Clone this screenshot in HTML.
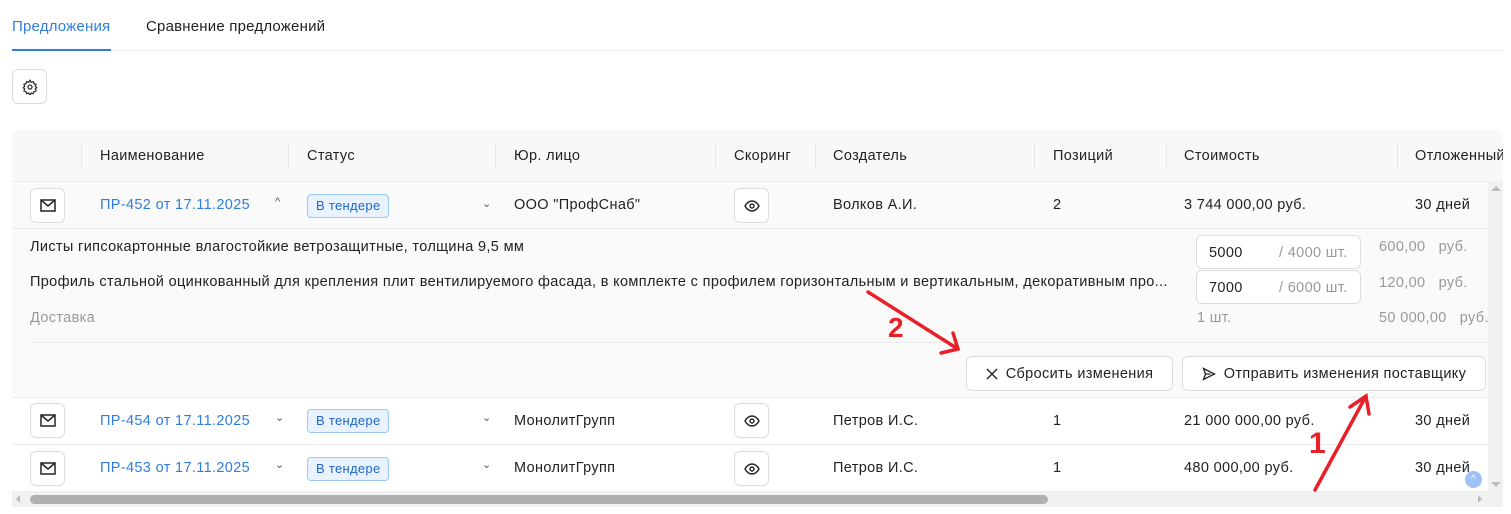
<!DOCTYPE html>
<html><head><meta charset="utf-8"><style>
*{box-sizing:border-box;margin:0;padding:0}
body{width:1511px;height:514px;overflow:hidden;background:#fff;font-family:"Liberation Sans","DejaVu Sans",sans-serif;font-size:14.5px;letter-spacing:0.35px;color:#222;position:relative}
.a{position:absolute;white-space:nowrap}
.btn{position:absolute;border:1px solid #ddd;border-radius:6px;background:#fff;display:flex;align-items:center;justify-content:center}
.lnk{color:#2f7de1}
.tag{position:absolute;height:24px;padding:0 8px;border:1px solid #9cc8f5;background:#e8f3ff;color:#1f66c7;border-radius:4px;font-size:13px;line-height:22px;letter-spacing:0.3px}
.hl{position:absolute;height:1px;background:#ececec}
.vs{position:absolute;width:1px;height:26px;top:143px;background:#e6e6e6}
.g{color:#999}
.inp{position:absolute;width:165px;height:34px;border:1px solid #ddd;border-radius:6px;background:#fff}
</style></head><body>
<div class="a lnk" style="left:12px;top:18px;font-size:15px;letter-spacing:0.2px">Предложения</div>
<div class="a" style="left:146px;top:18px;font-size:15px;letter-spacing:0.2px">Сравнение предложений</div>
<div class="a" style="left:12px;top:49px;width:99px;height:2px;background:#2f7de1"></div>
<div class="hl" style="left:111px;top:50px;width:1392px"></div>
<div class="btn" style="left:12px;top:69px;width:35px;height:35px"><svg width="16" height="16" viewBox="0 0 24 24" fill="none" stroke="#333" stroke-width="2"><circle cx="12" cy="12" r="3"/><path d="M12 2l2 3 3-1 1 3 3 1-1 3 2 2-2 2 1 3-3 1-1 3-3-1-2 3-2-3-3 1-1-3-3-1 1-3-2-2 2-2-1-3 3-1 1-3 3 1z"/></svg></div>

<div class="a" style="left:12px;top:130px;width:1491px;height:51px;background:#f8f8f8;border-radius:8px 8px 0 0"></div>
<div class="vs" style="left:81px"></div><div class="vs" style="left:288px"></div><div class="vs" style="left:495px"></div><div class="vs" style="left:715px"></div><div class="vs" style="left:815px"></div><div class="vs" style="left:1034px"></div><div class="vs" style="left:1166px"></div><div class="vs" style="left:1397px"></div>
<div class="a" style="left:100px;top:148px">Наименование</div>
<div class="a" style="left:307px;top:148px">Статус</div>
<div class="a" style="left:514px;top:148px">Юр. лицо</div>
<div class="a" style="left:734px;top:148px">Скоринг</div>
<div class="a" style="left:833px;top:148px">Создатель</div>
<div class="a" style="left:1053px;top:148px">Позиций</div>
<div class="a" style="left:1184px;top:148px">Стоимость</div>
<div class="a" style="left:1415px;top:148px;width:88px;overflow:hidden">Отложенный</div>
<div class="hl" style="left:12px;top:181px;width:1476px"></div>

<div class="a" style="left:12px;top:182px;width:1476px;height:215px;background:#fafafa"></div>
<div class="hl" style="left:12px;top:228px;width:1476px"></div>
<div class="hl" style="left:30px;top:342px;width:1458px"></div>
<div class="hl" style="left:12px;top:397px;width:1476px"></div>
<div class="hl" style="left:12px;top:444px;width:1476px"></div>

<!-- row 1 -->
<div class="btn" style="left:30px;top:188px;width:35px;height:35px"><svg width="16" height="13" viewBox="0 0 16 13" fill="none" stroke="#222" stroke-width="1.5"><rect x="1" y="1" width="14" height="11"/><path d="M1 1l7 6 7-6"/></svg></div>
<div class="a lnk" style="left:100px;top:197px">ПР-452 от 17.11.2025</div>
<div class="a" style="left:275px;top:196px;font-size:11px;color:#555">^</div>
<div class="tag" style="left:307px;top:194px">В тендере</div>
<div class="a" style="left:482px;top:197px;font-size:11px;color:#555">⌄</div>
<div class="a" style="left:514px;top:197px">ООО "ПрофСнаб"</div>
<div class="btn" style="left:734px;top:188px;width:35px;height:35px"><svg width="16" height="12" viewBox="0 0 16 12" fill="none" stroke="#222" stroke-width="1.4"><path d="M1 6C3 2.5 5.5 1 8 1s5 1.5 7 5c-2 3.5-4.5 5-7 5S3 9.5 1 6z"/><circle cx="8" cy="6" r="2"/></svg></div>
<div class="a" style="left:833px;top:197px">Волков А.И.</div>
<div class="a" style="left:1053px;top:197px">2</div>
<div class="a" style="left:1184px;top:197px">3 744 000,00 руб.</div>
<div class="a" style="left:1415px;top:197px">30 дней</div>

<!-- expansion -->
<div class="a" style="left:30px;top:239px">Листы гипсокартонные влагостойкие ветрозащитные, толщина 9,5 мм</div>
<div class="a" style="left:30px;top:274px">Профиль стальной оцинкованный для крепления плит вентилируемого фасада, в комплекте с профилем горизонтальным и вертикальным, декоративным про...</div>
<div class="a g" style="left:30px;top:310px">Доставка</div>
<div class="inp" style="left:1196px;top:235px"></div>
<div class="a" style="left:1209px;top:245px">5000</div><div class="a g" style="left:1279px;top:245px">/ 4000 шт.</div>
<div class="inp" style="left:1196px;top:270px"></div>
<div class="a" style="left:1209px;top:280px">7000</div><div class="a g" style="left:1279px;top:280px">/ 6000 шт.</div>
<div class="a g" style="left:1197px;top:310px">1 шт.</div>
<div class="a g" style="left:1379px;top:239px">600,00 &nbsp; руб.</div>
<div class="a g" style="left:1379px;top:275px">120,00 &nbsp; руб.</div>
<div class="a g" style="left:1379px;top:310px">50 000,00 &nbsp; руб.</div>
<div class="btn" style="left:966px;top:356px;width:207px;height:35px;gap:8px"><svg width="12" height="12" viewBox="0 0 12 12" stroke="#222" stroke-width="1.4"><path d="M1 1l10 10M11 1L1 11"/></svg><span>Сбросить изменения</span></div>
<div class="btn" style="left:1182px;top:356px;width:304px;height:35px;gap:8px"><svg width="14" height="14" viewBox="0 0 14 14" fill="none" stroke="#222" stroke-width="1.3"><path d="M1.5 1.5l11 5.5-11 5.5 2-5.5z M3.5 7h5"/></svg><span>Отправить изменения поставщику</span></div>

<!-- row 2 -->
<div class="btn" style="left:30px;top:403px;width:35px;height:35px"><svg width="16" height="13" viewBox="0 0 16 13" fill="none" stroke="#222" stroke-width="1.5"><rect x="1" y="1" width="14" height="11"/><path d="M1 1l7 6 7-6"/></svg></div>
<div class="a lnk" style="left:100px;top:413px">ПР-454 от 17.11.2025</div>
<div class="a" style="left:275px;top:411px;font-size:11px;color:#555">⌄</div>
<div class="tag" style="left:307px;top:409px">В тендере</div>
<div class="a" style="left:482px;top:411px;font-size:11px;color:#555">⌄</div>
<div class="a" style="left:514px;top:413px">МонолитГрупп</div>
<div class="btn" style="left:734px;top:403px;width:35px;height:35px"><svg width="16" height="12" viewBox="0 0 16 12" fill="none" stroke="#222" stroke-width="1.4"><path d="M1 6C3 2.5 5.5 1 8 1s5 1.5 7 5c-2 3.5-4.5 5-7 5S3 9.5 1 6z"/><circle cx="8" cy="6" r="2"/></svg></div>
<div class="a" style="left:833px;top:413px">Петров И.С.</div>
<div class="a" style="left:1053px;top:413px">1</div>
<div class="a" style="left:1184px;top:413px">21 000 000,00 руб.</div>
<div class="a" style="left:1415px;top:413px">30 дней</div>

<!-- row 3 -->
<div class="btn" style="left:30px;top:451px;width:35px;height:35px"><svg width="16" height="13" viewBox="0 0 16 13" fill="none" stroke="#222" stroke-width="1.5"><rect x="1" y="1" width="14" height="11"/><path d="M1 1l7 6 7-6"/></svg></div>
<div class="a lnk" style="left:100px;top:460px">ПР-453 от 17.11.2025</div>
<div class="a" style="left:275px;top:458px;font-size:11px;color:#555">⌄</div>
<div class="tag" style="left:307px;top:457px">В тендере</div>
<div class="a" style="left:482px;top:458px;font-size:11px;color:#555">⌄</div>
<div class="a" style="left:514px;top:460px">МонолитГрупп</div>
<div class="btn" style="left:734px;top:451px;width:35px;height:35px"><svg width="16" height="12" viewBox="0 0 16 12" fill="none" stroke="#222" stroke-width="1.4"><path d="M1 6C3 2.5 5.5 1 8 1s5 1.5 7 5c-2 3.5-4.5 5-7 5S3 9.5 1 6z"/><circle cx="8" cy="6" r="2"/></svg></div>
<div class="a" style="left:833px;top:460px">Петров И.С.</div>
<div class="a" style="left:1053px;top:460px">1</div>
<div class="a" style="left:1184px;top:460px">480 000,00 руб.</div>
<div class="a" style="left:1415px;top:460px">30 дней</div>

<!-- scrollbars -->
<div class="a" style="left:1488px;top:181px;width:15px;height:310px;background:#f1f1f1"></div>
<div class="a" style="left:1491px;top:186px;width:0;height:0;border:5px solid transparent;border-bottom-color:#bbb;border-top:0"></div>
<div class="a" style="left:1491px;top:482px;width:0;height:0;border:5px solid transparent;border-top-color:#bbb;border-bottom:0"></div>
<div class="a" style="left:12px;top:491px;width:1491px;height:16px;background:#f1f1f1"></div>
<div class="a" style="left:30px;top:495px;width:1018px;height:9px;background:#b0b0b0;border-radius:5px"></div>
<div class="a" style="left:16px;top:495px;width:0;height:0;border:4px solid transparent;border-right-color:#bbb;border-left:0"></div>
<div class="a" style="left:1478px;top:495px;width:0;height:0;border:4px solid transparent;border-left-color:#bbb;border-right:0"></div>
<div class="a" style="left:1465px;top:471px;width:17px;height:17px;border-radius:50%;background:#9ec2f5;color:#fff;font-size:10px;text-align:center;line-height:17px">^</div>

<!-- annotations -->
<svg class="a" style="left:0;top:0" width="1511" height="514" fill="none" stroke="#e8202a" stroke-width="3.5" stroke-linecap="round">
<path d="M868 292L958 349M941 353L958 349L953 333"/>
<path d="M1315 490L1366 396M1350 407L1366 396L1369 414"/>
</svg>
<div class="a" style="left:888px;top:312px;color:#e8202a;font-weight:bold;font-size:28px">2</div>
<div class="a" style="left:1309px;top:427px;color:#e8202a;font-weight:bold;font-size:30px">1</div>
</body></html>
